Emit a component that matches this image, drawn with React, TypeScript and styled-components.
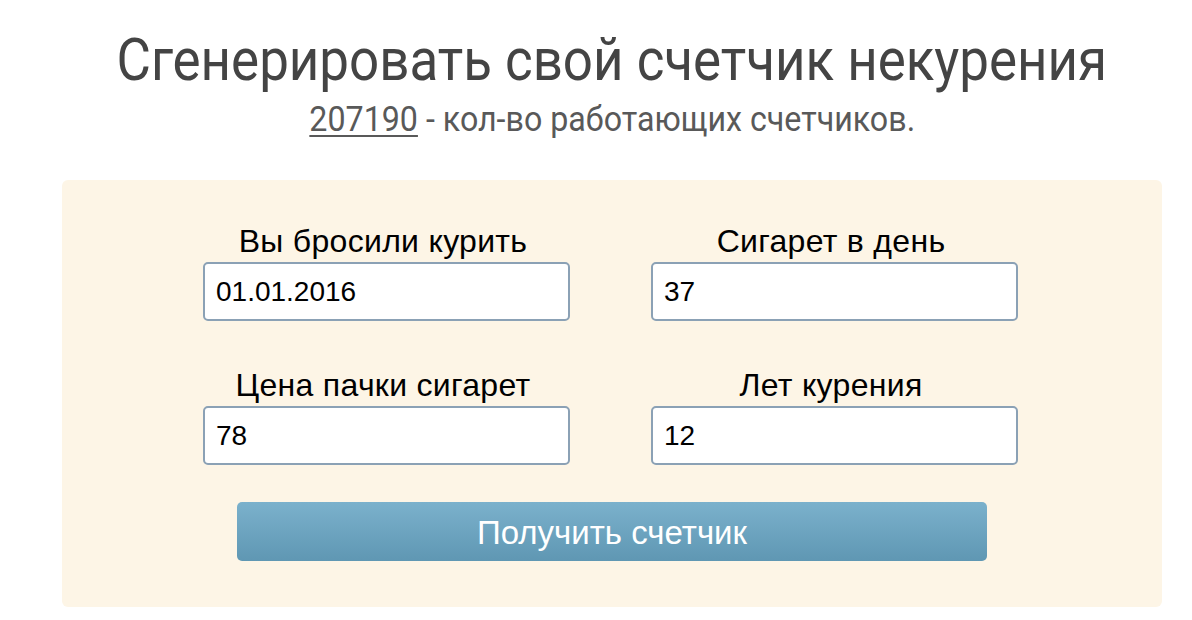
import React from "react";
import styled, { createGlobalStyle } from "styled-components";

const GlobalStyle = createGlobalStyle`
  html, body {
    margin: 0;
    padding: 0;
    background: #ffffff;
  }
  body {
    font-family: "Liberation Sans", Arial, sans-serif;
  }
`;

const Page = styled.div`
  width: 1192px;
  height: 620px;
  display: flex;
  flex-direction: column;
  align-items: center;
  box-sizing: border-box;
  padding: 24px 0 0 32px;
`;

const Title = styled.h1`
  margin: 0;
  font-family: "Roboto", "Noto Sans", sans-serif;
  font-weight: 400;
  font-size: 59px;
  line-height: 72px;
  color: #444444;
  text-align: center;
  white-space: nowrap;
  transform: scaleX(0.896);
`;

const Subtitle = styled.p`
  margin: 2px 0 0;
  font-family: "Roboto", "Noto Sans", sans-serif;
  font-size: 35px;
  line-height: 44px;
  color: #595959;
  text-align: center;
  white-space: nowrap;
  transform: scaleX(0.92);
`;

const CountLink = styled.a`
  color: #595959;
  text-decoration: underline;
  text-underline-offset: 4px;
  text-decoration-thickness: 2px;
`;

const Panel = styled.form`
  margin-top: 38px;
  width: 1100px;
  height: 427px;
  box-sizing: border-box;
  background: #fdf5e6;
  border-radius: 6px;
  display: flex;
  flex-direction: column;
  align-items: center;
  padding-top: 42px;
`;

const FieldGrid = styled.div`
  display: grid;
  grid-template-columns: 367px 367px;
  column-gap: 81px;
  row-gap: 45px;
  margin-right: 3px;
`;

const Field = styled.label`
  display: flex;
  flex-direction: column;
  align-items: center;
`;

const FieldLabel = styled.span`
  font-size: 32px;
  line-height: 38px;
  letter-spacing: 0.3px;
  color: #000000;
  margin-bottom: 2px;
  padding-right: 7px;
`;

const Input = styled.input`
  width: 100%;
  height: 59px;
  box-sizing: border-box;
  border: 2px solid #8ba1b5;
  border-radius: 5px;
  background: #ffffff;
  padding: 0 11px;
  font-family: "Liberation Sans", Arial, sans-serif;
  font-size: 28px;
  color: #000000;
  outline: none;
`;

const SubmitButton = styled.button`
  margin-top: 37px;
  width: 750px;
  height: 59px;
  border: none;
  border-radius: 5px;
  background: linear-gradient(to bottom, #7bb1cc 0%, #5f97b3 100%);
  color: #ffffff;
  font-family: "Liberation Sans", Arial, sans-serif;
  font-size: 33px;
  padding: 2px 0 0;
  cursor: pointer;
`;

const fields = [
  { label: "Вы бросили курить", value: "01.01.2016" },
  { label: "Сигарет в день", value: "37" },
  { label: "Цена пачки сигарет", value: "78" },
  { label: "Лет курения", value: "12" },
];

export default function App() {
  return (
    <>
      <GlobalStyle />
      <Page>
        <Title>Сгенерировать свой счетчик некурения</Title>
        <Subtitle>
          <CountLink href="#">207190</CountLink> - кол-во работающих счетчиков.
        </Subtitle>
        <Panel onSubmit={(e) => e.preventDefault()}>
          <FieldGrid>
            {fields.map((f) => (
              <Field key={f.label}>
                <FieldLabel>{f.label}</FieldLabel>
                <Input type="text" defaultValue={f.value} />
              </Field>
            ))}
          </FieldGrid>
          <SubmitButton type="submit">Получить счетчик</SubmitButton>
        </Panel>
      </Page>
    </>
  );
}
